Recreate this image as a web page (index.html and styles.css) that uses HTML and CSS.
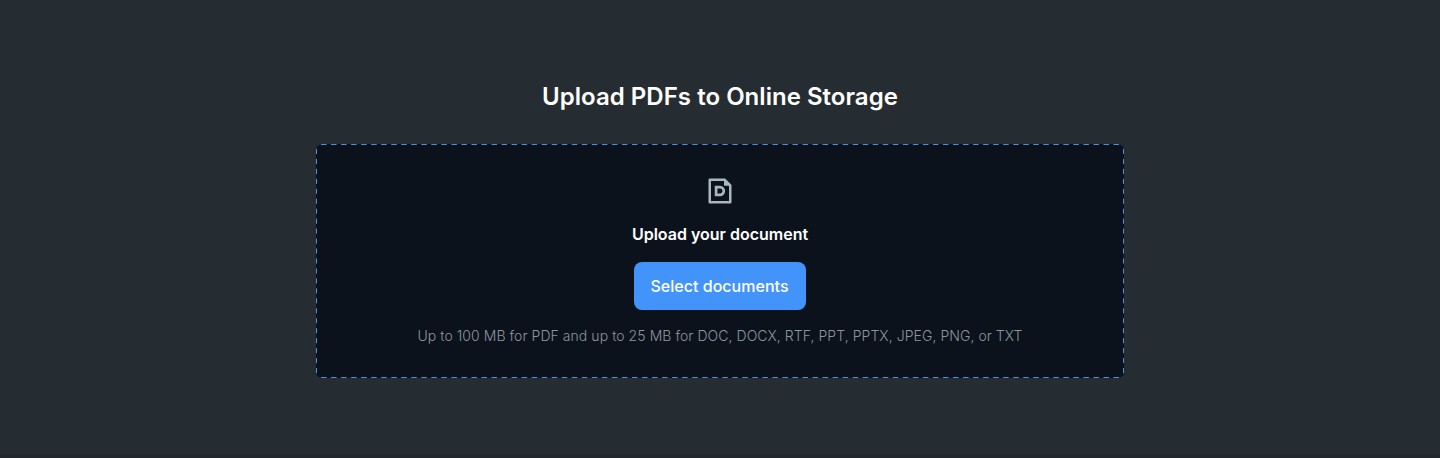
FILE: index.html
```html
<!DOCTYPE html>
<html lang="en">
<head>
<meta charset="utf-8">
<title>Upload PDFs to Online Storage</title>
<link rel="stylesheet" href="styles.css">
</head>
<body>
<main class="upload">
  <h1 class="title">Upload PDFs to Online Storage</h1>
  <section class="dropzone">
    <svg class="outline" width="808" height="234" aria-hidden="true">
      <path class="edge-h" d="M5 .5h798M5 233.5h798"/>
      <path class="edge-v" d="M.5 5v224M807.5 5v224"/>
    </svg>
    <svg class="doc-icon" width="32" height="32" viewBox="0 0 32 32" fill="none" aria-hidden="true">
      <path d="M20.5 4.75H5.75v22.5h20.5V10.5z" stroke="currentColor" stroke-width="2.5" stroke-linejoin="round"/>
      <path d="M20 3.6v7.2h7.4z" fill="currentColor"/>
      <path d="M12.1 12.2h3.9a3.8 3.8 0 0 1 0 7.6h-3.9z" stroke="currentColor" stroke-width="2.7"/>
    </svg>
    <h2 class="subtitle">Upload your document</h2>
    <button class="select" type="button">Select documents</button>
    <p class="hint">Up to 100 MB for PDF and up to 25 MB for DOC, DOCX, RTF, PPT, PPTX, JPEG, PNG, or TXT</p>
  </section>
</main>
</body>
</html>
```
FILE: styles.css
```css
* { box-sizing: border-box; }
body { margin: 0; background: #262d32; font-family: Inter, sans-serif; }
.upload { height: 458px; padding-top: 81px; display: flex; flex-direction: column; align-items: center; border-bottom: 4px solid #22272d; }
.title { margin: 0 0 31px; font-size: 24px; line-height: 32px; font-weight: 600; letter-spacing: 0.03px; color: #fff; }
.dropzone { position: relative; width: 808px; height: 234px; padding-top: 31px; display: flex; flex-direction: column; align-items: center; background: #0c121b; border-radius: 6px; }
.outline { position: absolute; inset: 0; fill: none; stroke: #4a90e2; }
.edge-h { stroke-dasharray: 5.5 4.532; }
.edge-v { stroke-dasharray: 5 4.955; }
.doc-icon { color: #a9b5bf; }
.subtitle { margin: 15px 0 16px; font-size: 16px; line-height: 24px; font-weight: 600; color: #fff; }
.select { width: 172px; height: 48px; padding: 0 1px 0 0; border: 0; border-radius: 8px; background: #4294fa; color: #fff; font: 500 16px/24px Inter, sans-serif; letter-spacing: 0.03px; }
.hint { margin: 16px 0 0; font-size: 14px; line-height: 20px; font-weight: 300; letter-spacing: 0.06px; color: #8b969f; }
```
